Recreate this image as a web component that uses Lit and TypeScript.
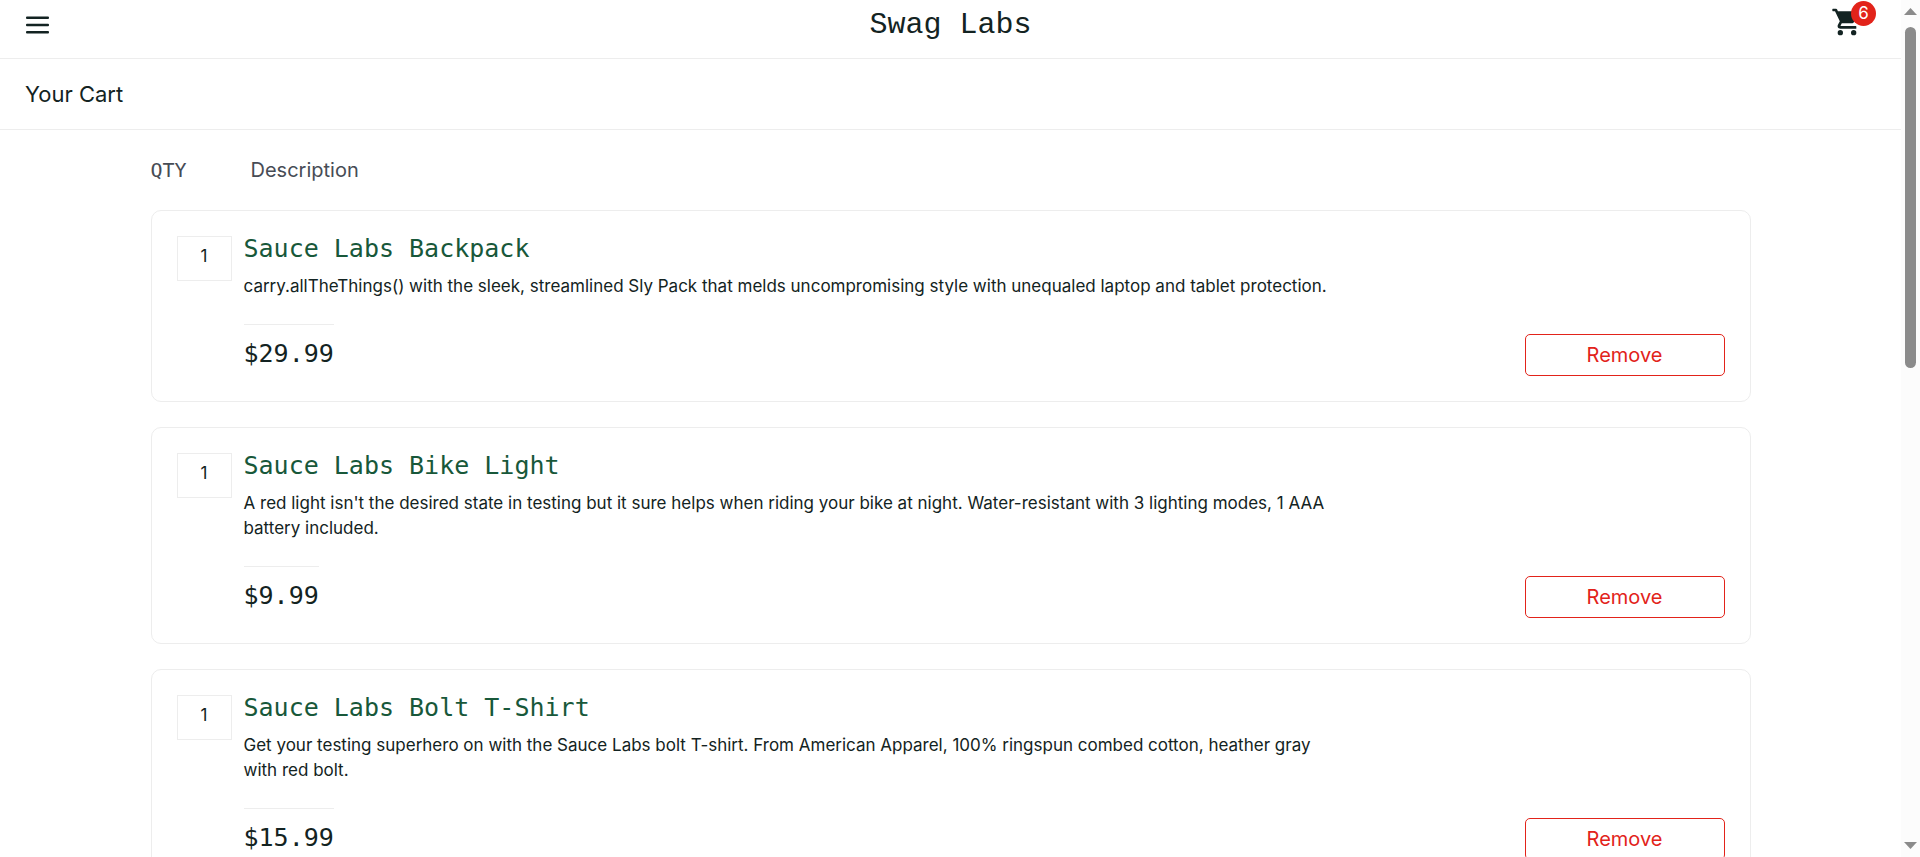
import { LitElement, html, css } from "lit";
import { customElement, property } from "lit/decorators.js";

interface Product {
  name: string;
  description: string;
  price: string;
  quantity: number;
}

const PRODUCTS: Product[] = [
  {
    name: "Sauce Labs Backpack",
    description:
      "carry.allTheThings() with the sleek, streamlined Sly Pack that melds uncompromising style with unequaled laptop and tablet protection.",
    price: "$29.99",
    quantity: 1,
  },
  {
    name: "Sauce Labs Bike Light",
    description:
      "A red light isn't the desired state in testing but it sure helps when riding your bike at night. Water-resistant with 3 lighting modes, 1 AAA battery included.",
    price: "$9.99",
    quantity: 1,
  },
  {
    name: "Sauce Labs Bolt T-Shirt",
    description:
      "Get your testing superhero on with the Sauce Labs bolt T-shirt. From American Apparel, 100% ringspun combed cotton, heather gray with red bolt.",
    price: "$15.99",
    quantity: 1,
  },
];

@customElement("cart-item")
export class CartItem extends LitElement {
  @property({ attribute: false }) product!: Product;

  static styles = css`
    :host {
      display: flex;
      gap: 12px;
      box-sizing: border-box;
      padding: 25px;
      border: 1px solid #ededed;
      border-radius: 10px;
    }
    .quantity {
      box-sizing: border-box;
      flex: none;
      width: 55px;
      height: 45px;
      padding-top: 7px;
      border: 1px solid #ededed;
      text-align: center;
      font-size: 17px;
      line-height: 25px;
    }
    .details {
      flex: 1;
      min-width: 0;
    }
    .name {
      display: block;
      width: fit-content;
      color: #18583a;
      font: 400 25px/26px "DejaVu Sans Mono", monospace;
      text-decoration: none;
    }
    .description {
      max-width: 1100px;
      margin: 12px 0 25px;
      font-size: 17px;
      line-height: 25px;
    }
    .pricebar {
      display: flex;
      justify-content: space-between;
      align-items: flex-end;
    }
    .price {
      padding: 16px 0 9px;
      border-top: 1px solid #ededed;
      font: 400 25px/26px "DejaVu Sans Mono", monospace;
    }
    .remove {
      width: 200px;
      height: 42px;
      padding: 0;
      border: 1px solid #e2231a;
      border-radius: 5px;
      background: #fff;
      color: #e2231a;
      font: 400 20px/24px Inter, sans-serif;
      cursor: pointer;
    }
  `;

  render() {
    const { name, description, price, quantity } = this.product;
    return html`
      <div class="quantity">${quantity}</div>
      <div class="details">
        <a class="name" href="#">${name}</a>
        <p class="description">${description}</p>
        <div class="pricebar">
          <div class="price">${price}</div>
          <button class="remove" type="button">Remove</button>
        </div>
      </div>
    `;
  }
}

@customElement("scroll-rail")
export class ScrollRail extends LitElement {
  @property({ type: Number }) size = 42.5;

  static styles = css`
    :host {
      display: flex;
      flex-direction: column;
      align-items: center;
      box-sizing: border-box;
      width: 19px;
      padding: 8px 0;
      background: #fcfcfc;
    }
    .arrow {
      display: block;
      flex: none;
      width: 13px;
      height: 7px;
      fill: #8b8b8b;
    }
    .track {
      flex: 1;
      width: 11px;
      margin: 12px 0;
    }
    .thumb {
      border-radius: 6px;
      background: #8b8b8b;
    }
  `;

  render() {
    return html`
      <svg class="arrow" viewBox="0 0 13 7"><path d="M0 7 6.500 0 13 7z" /></svg>
      <div class="track"><div class="thumb" style="height:${this.size}%"></div></div>
      <svg class="arrow" viewBox="0 0 13 7"><path d="M0 0h13L6.500 7z" /></svg>
    `;
  }
}

@customElement("app-root")
export class AppRoot extends LitElement {
  static styles = css`
    :host {
      display: flex;
      height: 100vh;
      background: #fff;
      color: #132322;
      font-family: Inter, sans-serif;
    }
    .page {
      flex: 1;
      min-width: 0;
      overflow-y: auto;
      scrollbar-width: none;
    }
    .header {
      display: grid;
      grid-template-columns: 1fr auto 1fr;
      align-items: start;
      box-sizing: border-box;
      height: 59px;
      padding: 6px 25px 0;
      border-bottom: 1px solid #ededed;
    }
    .menu {
      justify-self: start;
      width: 25px;
      height: 38px;
      padding: 0;
      border: 0;
      background: none;
      cursor: pointer;
    }
    .menu svg {
      display: block;
      width: 25px;
      height: 18px;
      fill: #132322;
    }
    .logo {
      padding-top: 2px;
      font: 400 30px/34px "Liberation Mono", monospace;
    }
    .cart {
      position: relative;
      justify-self: end;
      width: 45px;
      height: 32px;
    }
    .cart svg {
      display: block;
      width: 32px;
      height: 32px;
      fill: #132322;
    }
    .badge {
      position: absolute;
      top: -5px;
      right: 0;
      width: 25px;
      height: 25px;
      border-radius: 50%;
      background: #e2231a;
      color: #fff;
      font-size: 17px;
      line-height: 25px;
      text-align: center;
    }
    .subheader {
      padding: 20px 25px;
      border-bottom: 1px solid #ededed;
    }
    .title {
      margin: 0;
      font-size: 22px;
      font-weight: 400;
      line-height: 30px;
    }
    .list {
      display: flex;
      flex-direction: column;
      gap: 25px;
      max-width: 1600px;
      margin: 0 auto;
      padding: 25px 0;
    }
    .labels {
      display: grid;
      grid-template-columns: 100px 1fr;
      color: #474c55;
      font-size: 20px;
      line-height: 30px;
    }
    .qty {
      font-family: "DejaVu Sans Mono", monospace;
    }
    .rail {
      flex: none;
    }
  `;

  render() {
    return html`
      <div class="page">
        <header class="header">
          <button class="menu" type="button" aria-label="Open Menu">
            <svg viewBox="0 0 25 18">
              <rect x="1" y="0.500" width="23" height="2.600" rx="1" />
              <rect x="1" y="7.700" width="23" height="2.600" rx="1" />
              <rect x="1" y="14.900" width="23" height="2.600" rx="1" />
            </svg>
          </button>
          <div class="logo">Swag Labs</div>
          <a class="cart" href="#" aria-label="Shopping cart">
            <svg viewBox="0 0 24 24">
              <path
                d="M7 18a2 2 0 1 0 0 4 2 2 0 0 0 0-4zM17 18a2 2 0 1 0 0 4 2 2 0 0 0 0-4zM1.400 2Q1 2 1 2.400V3.400Q1 3.900 1.400 3.900H3L6.600 11.500 5.200 14.100C4.500 15.500 5.400 17 7 17H18.600Q19 17 19 16.600V15.400Q19 15 18.600 15H7.400C7.200 15 7.100 14.800 7.200 14.600L8.100 13H15.500C16.300 13 16.900 12.600 17.300 12L20.900 5.500C21.300 4.800 20.800 4 20 4H5.200L4.500 2.500Q4.300 2 3.800 2z"
              />
            </svg>
            <span class="badge">6</span>
          </a>
        </header>
        <div class="subheader"><h1 class="title">Your Cart</h1></div>
        <main class="list">
          <div class="labels">
            <div class="qty">QTY</div>
            <div>Description</div>
          </div>
          ${PRODUCTS.map((p) => html`<cart-item .product=${p}></cart-item>`)}
        </main>
      </div>
      <scroll-rail class="rail"></scroll-rail>
    `;
  }
}
